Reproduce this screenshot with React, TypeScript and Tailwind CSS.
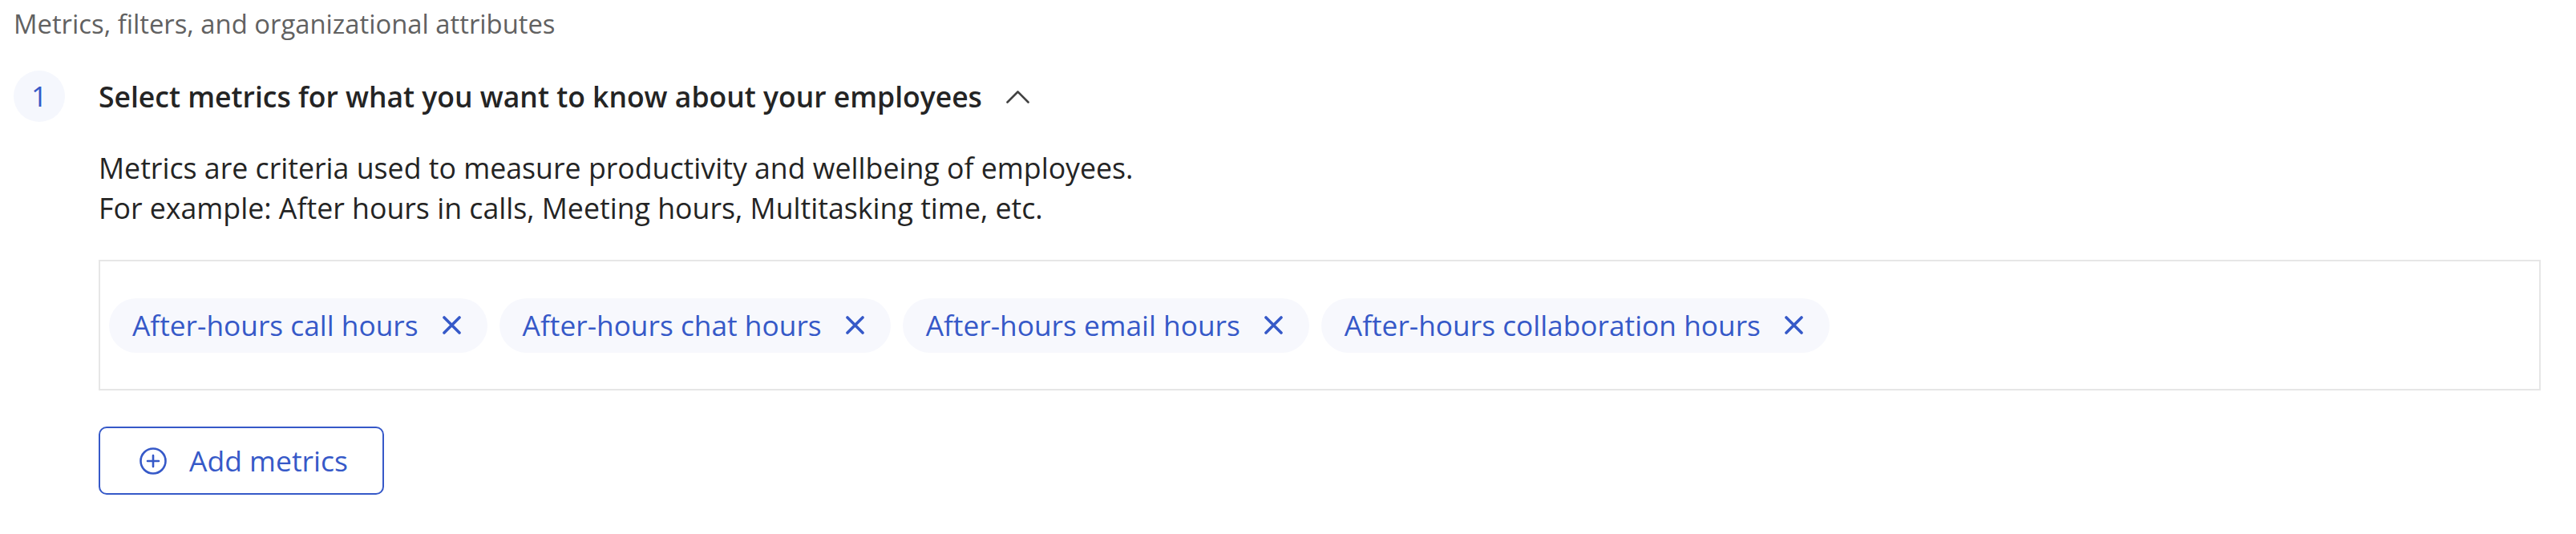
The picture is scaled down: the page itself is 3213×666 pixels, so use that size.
import React from 'react';

const metrics = [
  'After-hours call hours',
  'After-hours chat hours',
  'After-hours email hours',
  'After-hours collaboration hours',
];

function Dismiss() {
  return (
    <svg width="23" height="23" viewBox="0 0 23 23" fill="none" className="shrink-0">
      <path d="M2 2L21 21M21 2L2 21" stroke="currentColor" strokeWidth="3.6" strokeLinecap="round" />
    </svg>
  );
}

function ChevronUp() {
  return (
    <svg width="29" height="17" viewBox="0 0 29 17" fill="none" className="shrink-0">
      <path d="M1.5 15.5L14.5 2.5L27.5 15.5" stroke="#424242" strokeWidth="2.6" strokeLinecap="round" strokeLinejoin="round" />
    </svg>
  );
}

function AddCircle() {
  return (
    <svg width="34" height="34" viewBox="0 0 34 34" fill="none" className="shrink-0">
      <circle cx="17" cy="17" r="15.5" stroke="currentColor" strokeWidth="2.6" />
      <path d="M17 10V24M10 17H24" stroke="currentColor" strokeWidth="2.6" strokeLinecap="round" />
    </svg>
  );
}

export default function App() {
  return (
    <div className="min-h-screen bg-white pl-[17px] pr-[44px] pt-[5px] font-['Open_Sans',sans-serif] text-[#242424]">
      <p className="text-[32.8px] leading-[50px] text-[#616161]">Metrics, filters, and organizational attributes</p>

      <div className="mt-[33px] grid grid-cols-[64px_1fr] gap-x-[42px]">
        <div className="flex h-[64px] w-[64px] items-center justify-center rounded-full bg-[#f5f7fd] text-[35px] text-[#3659c8]">
          1
        </div>
        <div className="flex items-center gap-[30px]">
          <h2 className="text-[35.5px] font-semibold leading-[50px]">Select metrics for what you want to know about your employees</h2>
          <ChevronUp />
        </div>

        <div className="col-start-2 mt-[32px]">
          <p className="text-[35.7px] leading-[50px]">
            Metrics are criteria used to measure productivity and wellbeing of employees.
            <br />
            For example: After hours in calls, Meeting hours, Multitasking time, etc.
          </p>

          <div className="mt-[40px] flex h-[163px] flex-wrap items-center gap-[15px] border-[2.5px] border-[#e6e6e6] px-[11px]">
            {metrics.map((m) => (
              <span
                key={m}
                className="flex h-[68px] items-center gap-[30px] rounded-full bg-[#f7f8fd] pl-[29px] pr-[33px] text-[35.3px] text-[#3659c8]"
              >
                {m}
                <Dismiss />
              </span>
            ))}
          </div>

          <button
            type="button"
            className="mt-[45px] flex h-[85px] w-[356px] items-center gap-[28px] rounded-[10px] border-[2.5px] border-[#3659c8] pl-[49px] text-[35.5px] text-[#3659c8]"
          >
            <AddCircle />
            Add metrics
          </button>
        </div>
      </div>
    </div>
  );
}
